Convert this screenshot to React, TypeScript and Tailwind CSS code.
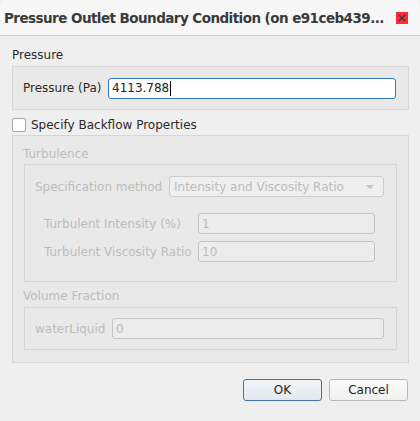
const font = { fontFamily: '"DejaVu Sans", "Liberation Sans", sans-serif' }

function Field({ value, w, disabled = false, focus = false }: { value: string; w: string; disabled?: boolean; focus?: boolean }) {
  if (focus) {
    return (
      <div className={`${w} h-[21px] flex items-center rounded-[3px] border border-[#2f78c4] bg-white pl-[3px] text-[#1e1e1e]`}>
        <span>{value}</span>
        <span className="ml-[1px] h-[15px] w-px bg-black" />
      </div>
    )
  }
  return (
    <div
      className={`${w} h-[21px] flex items-center rounded-[3px] border pl-[3px] ${
        disabled ? "border-[#c4c4c4] bg-[#ececec] text-[#bcbcbc]" : "border-[#b0b0b0] bg-white"
      }`}
    >
      {value}
    </div>
  )
}

export default function App() {
  return (
    <div style={font} className="w-[420px] h-[421px] bg-[#efefef] text-[12px] leading-[14px] text-[#2a2a2a] overflow-hidden">
      <div className="h-[36px] flex items-center justify-between border-b border-[#cdcdcd] bg-[#f7f7f7] rounded-t-[6px] pl-[4px] pr-[12px]">
        <span className="whitespace-nowrap text-[13.5px] font-bold tracking-[-0.55px] text-[#3a3a3a]">
          Pressure Outlet Boundary Condition (on e91ceb439...
        </span>
        <span className="w-[12px] h-[12px] flex items-center justify-center bg-red-500">
          <svg width="8" height="8" viewBox="0 0 8 8">
            <path d="M1 1L7 7M7 1L1 7" stroke="#3a3a3a" strokeWidth="1.3" />
          </svg>
        </span>
      </div>

      <div className="pl-[12px] pr-[11px]">
        <div className="mt-[12px] h-[14px]">Pressure</div>
        <div className="mt-[4px] h-[44px] flex items-center border border-[#d6d6d6] bg-[#e9e9e9] pl-[10px] pr-[12px]">
          <span className="w-[85px]">Pressure (Pa)</span>
          <Field value="4113.788" w="w-[288px]" focus />
        </div>

        <div className="mt-[8px] h-[14px] flex items-center">
          <span className="h-[14px] w-[14px] rounded-[2px] border border-[#a8a8a8] bg-white" />
          <span className="ml-[5px]">Specify Backflow Properties</span>
        </div>

        <div className="mt-[3px] h-[228px] border border-[#d6d6d6] bg-[#e9e9e9] text-[#bdbdbd]">
          <div className="pl-[10px] mt-[11px] h-[14px]">Turbulence</div>
          <div className="ml-[11px] mr-[11px] mt-[3px] h-[118px] border border-[#d6d6d6] pl-[10px] pt-[11px]">
            <div className="flex items-center">
              <span className="w-[134px]">Specification method</span>
              <div className="w-[215px] h-[21px] flex items-center justify-between rounded-[3px] border border-[#cdcdcd] bg-[#efefef] pl-[4px] pr-[9px]">
                <span>Intensity and Viscosity Ratio</span>
                <span className="h-0 w-0 border-l-[4px] border-r-[4px] border-t-[4px] border-l-transparent border-r-transparent border-t-[#c4c4c4]" />
              </div>
            </div>
            <div className="mt-[16px] pl-[9px] flex items-center">
              <span className="w-[154px]">Turbulent Intensity (%)</span>
              <Field value="1" w="w-[177px]" disabled />
            </div>
            <div className="mt-[7px] pl-[9px] flex items-center">
              <span className="w-[154px]">Turbulent Viscosity Ratio</span>
              <Field value="10" w="w-[177px]" disabled />
            </div>
          </div>
          <div className="pl-[10px] mt-[7px] h-[14px]">Volume Fraction</div>
          <div className="ml-[11px] mr-[11px] mt-[4px] h-[43px] flex items-center border border-[#d6d6d6] pl-[10px]">
            <span className="w-[77px]">waterLiquid</span>
            <Field value="0" w="w-[272px]" disabled />
          </div>
        </div>

        <div className="mt-[16px] flex justify-end gap-[7px] pr-[1px]">
          <button className="w-[79px] h-[22px] rounded-[3px] border border-[#3d74ad] bg-gradient-to-b from-[#f3f6f9] to-[#e2e8ee] text-[#1e1e1e]">OK</button>
          <button className="w-[79px] h-[22px] rounded-[3px] border border-[#b8b8b8] bg-gradient-to-b from-[#fbfbfb] to-[#f0f0f0] text-[#1e1e1e]">Cancel</button>
        </div>
      </div>
    </div>
  )
}
